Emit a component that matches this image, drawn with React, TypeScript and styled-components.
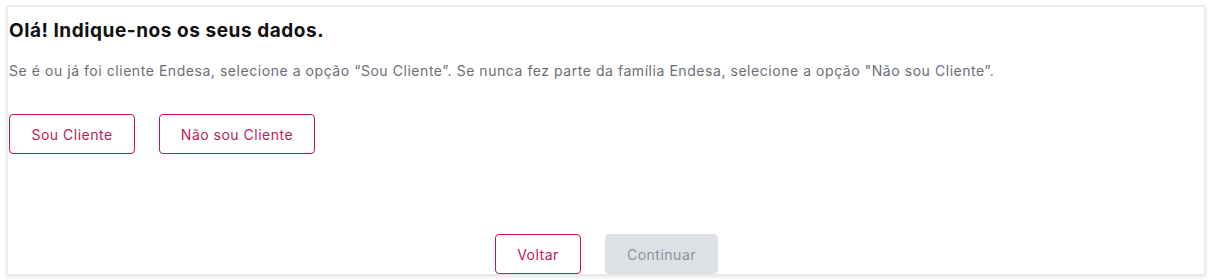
import React from 'react'
import styled, { createGlobalStyle } from 'styled-components'

const GlobalStyle = createGlobalStyle`
  html, body {
    margin: 0;
    padding: 0;
    background: #ffffff;
    font-family: Inter, "Noto Sans", sans-serif;
  }
`

const Page = styled.div`
  padding: 5px 6px 0 6px;
  height: 280px;
  box-sizing: border-box;
  overflow: hidden;
`

const Panel = styled.div`
  display: flex;
  flex-direction: column;
  height: 269px;
  box-sizing: border-box;
  border: 2px solid #ececec;
  border-bottom: none;
  box-shadow: 0 3px 3px rgba(0, 0, 0, 0.1);
  padding: 0 0 0 1px;
  background: #fff;
`

const Heading = styled.h1`
  margin: 12px 0 0 0;
  font-size: 19px;
  line-height: 24px;
  font-weight: 700;
  letter-spacing: 0.55px;
  color: #111;
`

const Para = styled.p`
  margin: 19px 0 0 0;
  font-size: 14px;
  line-height: 18px;
  letter-spacing: 0.55px;
  color: #6a6f76;
`

const OptionRow = styled.div`
  display: flex;
  gap: 24px;
  margin-top: 34px;
`

const Footer = styled.div`
  display: flex;
  justify-content: center;
  gap: 24px;
  margin-top: auto;
`

const Button = styled.button<{ $disabled?: boolean; $w: number }>`
  width: ${p => p.$w}px;
  height: 40px;
  box-sizing: border-box;
  border-radius: 4px;
  font-family: Inter, "Noto Sans", sans-serif;
  font-size: 14px;
  letter-spacing: 0.5px;
  cursor: pointer;
  border: 1px solid ${p => (p.$disabled ? '#dde0e5' : '#c2185b')};
  background: ${p => (p.$disabled ? '#dde0e5' : '#fff')};
  color: ${p => (p.$disabled ? '#8a939e' : '#c2185b')};
`

const App = () => {
  return (
    <>
      <GlobalStyle />
      <Page>
        <Panel>
          <Heading>Olá! Indique-nos os seus dados.</Heading>
          <Para>
            Se é ou já foi cliente Endesa, selecione a opção “Sou Cliente”. Se nunca fez parte da família Endesa, selecione a opção "Não sou Cliente”.
          </Para>
          <OptionRow>
            <Button $w={126}>Sou Cliente</Button>
            <Button $w={156}>Não sou Cliente</Button>
          </OptionRow>
          <Footer>
            <Button $w={86}>Voltar</Button>
            <Button $w={113} $disabled>Continuar</Button>
          </Footer>
        </Panel>
      </Page>
    </>
  )
}

export default App
